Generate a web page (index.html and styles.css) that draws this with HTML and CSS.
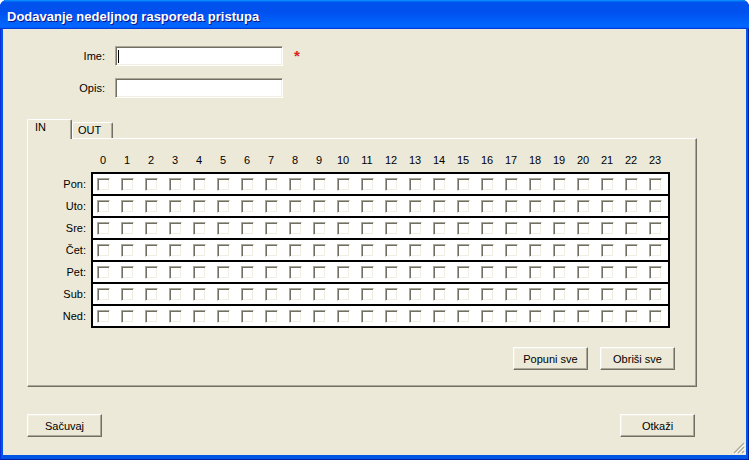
FILE: index.html
```html
<!DOCTYPE html>
<html>
<head>
<meta charset="utf-8">
<link rel="stylesheet" href="styles.css">
</head>
<body>
<div class="window">
  <div class="titlebar">Dodavanje nedeljnog rasporeda pristupa</div>
  <div class="client">
    <div class="form">
      <div class="field">
        <label class="lbl">Ime:</label>
        <div class="input"><span class="caret"></span></div>
        <span class="req">*</span>
      </div>
      <div class="field">
        <label class="lbl">Opis:</label>
        <div class="input"></div>
      </div>
    </div>

    <div class="tabs">
      <div class="tab active">IN</div>
      <div class="tab">OUT</div>
    </div>
    <div class="panel">
      <div class="hours">
        <span>0</span><span>1</span><span>2</span><span>3</span><span>4</span><span>5</span><span>6</span><span>7</span><span>8</span><span>9</span><span>10</span><span>11</span><span>12</span><span>13</span><span>14</span><span>15</span><span>16</span><span>17</span><span>18</span><span>19</span><span>20</span><span>21</span><span>22</span><span>23</span>
      </div>
      <div class="gridwrap">
        <div class="days">
          <div>Pon:</div><div>Uto:</div><div>Sre:</div><div>Čet:</div><div>Pet:</div><div>Sub:</div><div>Ned:</div>
        </div>
        <div class="grid">
          <div class="row"><span class="cb"></span><span class="cb"></span><span class="cb"></span><span class="cb"></span><span class="cb"></span><span class="cb"></span><span class="cb"></span><span class="cb"></span><span class="cb"></span><span class="cb"></span><span class="cb"></span><span class="cb"></span><span class="cb"></span><span class="cb"></span><span class="cb"></span><span class="cb"></span><span class="cb"></span><span class="cb"></span><span class="cb"></span><span class="cb"></span><span class="cb"></span><span class="cb"></span><span class="cb"></span><span class="cb"></span></div>
          <div class="row"><span class="cb"></span><span class="cb"></span><span class="cb"></span><span class="cb"></span><span class="cb"></span><span class="cb"></span><span class="cb"></span><span class="cb"></span><span class="cb"></span><span class="cb"></span><span class="cb"></span><span class="cb"></span><span class="cb"></span><span class="cb"></span><span class="cb"></span><span class="cb"></span><span class="cb"></span><span class="cb"></span><span class="cb"></span><span class="cb"></span><span class="cb"></span><span class="cb"></span><span class="cb"></span><span class="cb"></span></div>
          <div class="row"><span class="cb"></span><span class="cb"></span><span class="cb"></span><span class="cb"></span><span class="cb"></span><span class="cb"></span><span class="cb"></span><span class="cb"></span><span class="cb"></span><span class="cb"></span><span class="cb"></span><span class="cb"></span><span class="cb"></span><span class="cb"></span><span class="cb"></span><span class="cb"></span><span class="cb"></span><span class="cb"></span><span class="cb"></span><span class="cb"></span><span class="cb"></span><span class="cb"></span><span class="cb"></span><span class="cb"></span></div>
          <div class="row"><span class="cb"></span><span class="cb"></span><span class="cb"></span><span class="cb"></span><span class="cb"></span><span class="cb"></span><span class="cb"></span><span class="cb"></span><span class="cb"></span><span class="cb"></span><span class="cb"></span><span class="cb"></span><span class="cb"></span><span class="cb"></span><span class="cb"></span><span class="cb"></span><span class="cb"></span><span class="cb"></span><span class="cb"></span><span class="cb"></span><span class="cb"></span><span class="cb"></span><span class="cb"></span><span class="cb"></span></div>
          <div class="row"><span class="cb"></span><span class="cb"></span><span class="cb"></span><span class="cb"></span><span class="cb"></span><span class="cb"></span><span class="cb"></span><span class="cb"></span><span class="cb"></span><span class="cb"></span><span class="cb"></span><span class="cb"></span><span class="cb"></span><span class="cb"></span><span class="cb"></span><span class="cb"></span><span class="cb"></span><span class="cb"></span><span class="cb"></span><span class="cb"></span><span class="cb"></span><span class="cb"></span><span class="cb"></span><span class="cb"></span></div>
          <div class="row"><span class="cb"></span><span class="cb"></span><span class="cb"></span><span class="cb"></span><span class="cb"></span><span class="cb"></span><span class="cb"></span><span class="cb"></span><span class="cb"></span><span class="cb"></span><span class="cb"></span><span class="cb"></span><span class="cb"></span><span class="cb"></span><span class="cb"></span><span class="cb"></span><span class="cb"></span><span class="cb"></span><span class="cb"></span><span class="cb"></span><span class="cb"></span><span class="cb"></span><span class="cb"></span><span class="cb"></span></div>
          <div class="row"><span class="cb"></span><span class="cb"></span><span class="cb"></span><span class="cb"></span><span class="cb"></span><span class="cb"></span><span class="cb"></span><span class="cb"></span><span class="cb"></span><span class="cb"></span><span class="cb"></span><span class="cb"></span><span class="cb"></span><span class="cb"></span><span class="cb"></span><span class="cb"></span><span class="cb"></span><span class="cb"></span><span class="cb"></span><span class="cb"></span><span class="cb"></span><span class="cb"></span><span class="cb"></span><span class="cb"></span></div>
        </div>
      </div>
      <div class="panel-actions">
        <button class="btn">Popuni sve</button>
        <button class="btn">Obriši sve</button>
      </div>
    </div>

    <div class="footer">
      <button class="btn">Sačuvaj</button>
      <button class="btn">Otkaži</button>
    </div>

    <svg class="grip" width="12" height="12" viewBox="0 0 12 12">
      <path d="M11 1 L1 11 M11 5 L5 11 M11 9 L9 11" stroke="#ACA899" stroke-width="1.2" fill="none"/>
      <path d="M12 2 L2 12 M12 6 L6 12 M12 10 L10 12" stroke="#FFFFFF" stroke-width="1" fill="none"/>
    </svg>
  </div>
</div>
</body>
</html>
```

FILE: styles.css
```css
html, body {
  margin: 0;
  padding: 0;
  width: 749px;
  height: 460px;
  overflow: hidden;
  background: #ffffff;
}

.window {
  width: 749px;
  height: 460px;
  box-sizing: border-box;
  display: flex;
  flex-direction: column;
  background: #0055e5;
  border-radius: 7px 7px 0 0;
  overflow: hidden;
  box-shadow: inset 1px 0 #0831d9, inset -1px 0 #001ea0, inset 0 -1px #001ea0;
}

.titlebar {
  flex: none;
  height: 29px;
  box-sizing: border-box;
  padding: 3px 0 0 7px;
  display: flex;
  align-items: center;
  color: #ffffff;
  font-family: "Liberation Sans", Arial, sans-serif;
  font-weight: bold;
  font-size: 13px;
  text-shadow: 1px 1px #0f1089;
  background: linear-gradient(180deg, #0997ff, #0053ee 8%, #0050ee 40%, #0066ff 88%, #0066ff 93%, #005bff 95%, #003dd7 96%, #003dd7);
}

.client {
  flex: 1;
  margin: 0 3px 5px 3px;
  background: #ece9d8;
  position: relative;
  font-family: "Liberation Sans", Tahoma, Arial, sans-serif;
  font-size: 11px;
  color: #000000;
}

.form {
  padding-top: 17px;
}

.field {
  display: flex;
  align-items: center;
  height: 20px;
}

.field + .field {
  margin-top: 12px;
}

.lbl {
  width: 102px;
  margin-right: 10px;
  text-align: right;
}

.input {
  width: 168px;
  height: 20px;
  box-sizing: border-box;
  background: #ffffff;
  border: 1px solid;
  border-color: #aca899 #ffffff #ffffff #aca899;
  box-shadow: inset 1px 1px #716f64, inset -1px -1px #f1efe2;
  display: flex;
  align-items: center;
}

.caret {
  display: block;
  width: 1px;
  height: 13px;
  margin-left: 2px;
  background: #000000;
}

.req {
  margin-left: 11px;
  margin-top: -1px;
  color: #e0201c;
  font-size: 15px;
  line-height: 15px;
  font-weight: bold;
}

.tabs {
  display: flex;
  align-items: flex-end;
  height: 19px;
  margin: 21px 0 0 24px;
  position: relative;
  z-index: 1;
}

.tab {
  height: 16px;
  box-sizing: border-box;
  width: 41px;
  padding: 1px 0 0 5px;
  background: #ece9d8;
  border-top: 1px solid #ffffff;
  border-left: 1px solid #ffffff;
  border-right: 1px solid #716f64;
  box-shadow: inset -1px 0 #aca899;
  border-radius: 2px 2px 0 0;
}

.tab.active {
  width: 45px;
  height: 20px;
  margin-bottom: -1px;
  padding: 1px 0 0 7px;
}

.panel {
  margin-left: 24px;
  width: 670px;
  height: 249px;
  box-sizing: border-box;
  border-left: 1px solid #ffffff;
  border-top: 1px solid #ffffff;
  border-right: 1px solid #716f64;
  border-bottom: 1px solid #716f64;
  box-shadow: inset -1px -1px #aca899;
  padding-top: 15px;
  display: flex;
  flex-direction: column;
}

.hours {
  display: flex;
  margin-left: 63px;
  height: 13px;
  line-height: 13px;
}

.hours span {
  width: 24px;
  text-align: center;
}

.gridwrap {
  display: flex;
  margin-top: 5px;
}

.days {
  width: 58px;
  margin-right: 5px;
  padding-top: 2px;
  display: flex;
  flex-direction: column;
  gap: 2px;
}

.days div {
  height: 20px;
  line-height: 20px;
  text-align: right;
}

.grid {
  width: 579px;
  box-sizing: border-box;
  border: 2px solid #000000;
  background: #000000;
  display: flex;
  flex-direction: column;
  gap: 2px;
}

.row {
  height: 20px;
  background: #ffffff;
  display: flex;
  align-items: center;
  padding-left: 4px;
  gap: 11px;
}

.cb {
  width: 13px;
  height: 13px;
  box-sizing: border-box;
  flex: none;
  background: #ffffff;
  border: 1px solid;
  border-color: #aca899 #ffffff #ffffff #aca899;
  box-shadow: inset 1px 1px #716f64, inset -1px -1px #f1efe2;
}

.panel-actions {
  display: flex;
  justify-content: flex-end;
  gap: 12px;
  margin-top: 19px;
  padding-right: 21px;
}

.btn {
  width: 75px;
  height: 23px;
  box-sizing: border-box;
  margin: 0;
  padding: 0;
  background: #ece9d8;
  border: 1px solid;
  border-color: #ffffff #716f64 #716f64 #ffffff;
  box-shadow: inset -1px -1px #aca899, inset 1px 1px #f1efe2;
  font-family: "Liberation Sans", Tahoma, Arial, sans-serif;
  font-size: 11px;
  color: #000000;
  border-radius: 0;
}

.footer {
  display: flex;
  justify-content: space-between;
  margin-top: 27px;
  padding: 0 51px 0 24px;
}

.grip {
  position: absolute;
  right: 1px;
  bottom: 1px;
}
```
